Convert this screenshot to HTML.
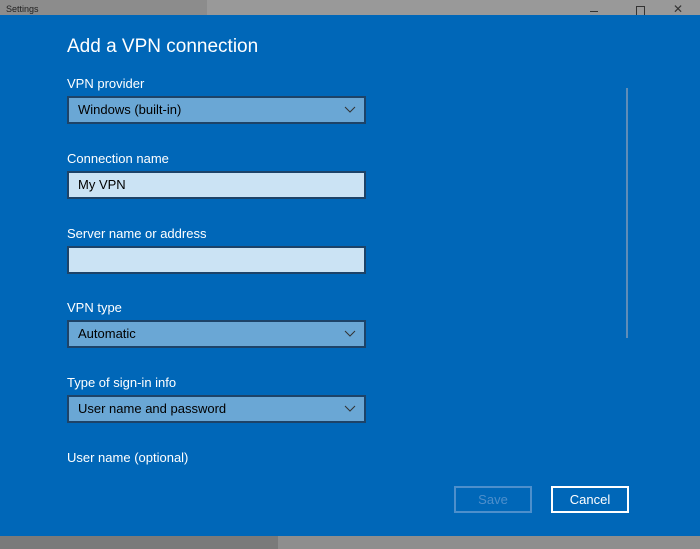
<!DOCTYPE html>
<html><head><style>
body{margin:0;width:700px;height:549px;overflow:hidden;background:#0067b8;font-family:"Liberation Sans",sans-serif;position:relative}
.top{position:absolute;left:0;top:0;width:700px;height:15px;background:#999}
.topl{position:absolute;left:0;top:0;width:207px;height:15px;background:#8c8c8c}
.bot{position:absolute;left:0;top:536px;width:700px;height:13px;background:#8e8e8e}
.botl{position:absolute;left:0;top:536px;width:278px;height:13px;background:#7a7a7a}
.t{position:absolute;color:#fff;font-size:13px}
.f{position:absolute;left:67px;width:295px;height:24px;border:2px solid #1d4368;color:#000;font-size:13px;line-height:24px;padding-left:0}
.f span{position:absolute;left:9px}
.dd{background:#6aa7d5}
.in{background:#cbe3f4}
.chev{position:absolute;right:8px;top:8px}
.btn{position:absolute;top:486px;width:74px;height:23px;border:2px solid;text-align:center;line-height:23px;font-size:13px}
</style></head><body>
<div class="top"></div><div class="topl"></div>
<div style="position:absolute;left:6px;top:4px;font-size:9px;color:#222">Settings</div>
<div style="position:absolute;left:590px;top:11px;width:8px;height:1px;background:#333"></div>
<div style="position:absolute;left:636px;top:6px;width:7px;height:8px;border:1px solid #333"></div>
<div style="position:absolute;left:673px;top:2px;font-size:12px;color:#333">✕</div>
<div style="position:absolute;left:0;top:15px;width:700px;height:521px;background:#0067b8"></div>
<div class="t" style="left:67px;top:36px;font-size:19px">Add a VPN connection</div>
<div style="position:absolute;left:626px;top:88px;width:2px;height:250px;background:#5f8db8"></div>
<div class="t" style="left:67px;top:76px">VPN provider</div>
<div class="f dd" style="top:96px"><span>Windows (built-in)</span><svg class="chev" width="12" height="8"><path d="M1 1l5 5 5-5" stroke="#333" fill="none"/></svg></div>
<div class="t" style="left:67px;top:151px">Connection name</div>
<div class="f in" style="top:171px"><span>My VPN</span></div>
<div class="t" style="left:67px;top:226px">Server name or address</div>
<div class="f in" style="top:246px"></div>
<div class="t" style="left:67px;top:300px">VPN type</div>
<div class="f dd" style="top:320px"><span>Automatic</span><svg class="chev" width="12" height="8"><path d="M1 1l5 5 5-5" stroke="#333" fill="none"/></svg></div>
<div class="t" style="left:67px;top:375px">Type of sign-in info</div>
<div class="f dd" style="top:395px"><span>User name and password</span><svg class="chev" width="12" height="8"><path d="M1 1l5 5 5-5" stroke="#333" fill="none"/></svg></div>
<div class="t" style="left:67px;top:450px">User name (optional)</div>
<div class="btn" style="left:454px;border-color:#4d8fcc;color:#4d8fcc">Save</div>
<div class="btn" style="left:551px;border-color:#fff;color:#fff">Cancel</div>
<div class="bot"></div><div class="botl"></div>
</body></html>
